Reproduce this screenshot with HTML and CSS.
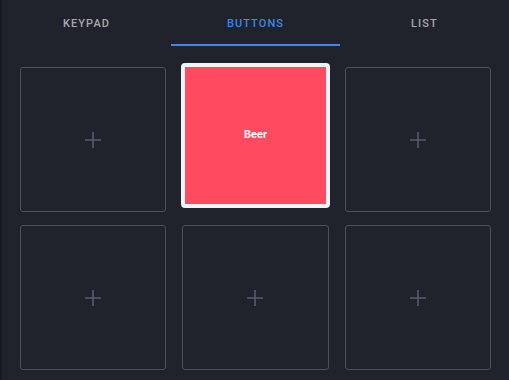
FILE: index.html
```html
<!DOCTYPE html>
<html>
<head>
<meta charset="utf-8">
<link rel="stylesheet" href="styles.css">
</head>
<body>
<div class="app">
  <div class="rail"></div>
  <main class="main">
    <nav class="tabs">
      <div class="tab">KEYPAD</div>
      <div class="tab active">BUTTONS</div>
      <div class="tab">LIST</div>
    </nav>
    <section class="grid">
      <div class="cell"><svg class="plus" viewBox="0 0 16 16"><path d="M8 0V16M0 8H16"/></svg></div>
      <div class="cell selected"><span class="label">Beer</span></div>
      <div class="cell"><svg class="plus" viewBox="0 0 16 16"><path d="M8 0V16M0 8H16"/></svg></div>
      <div class="cell"><svg class="plus" viewBox="0 0 16 16"><path d="M8 0V16M0 8H16"/></svg></div>
      <div class="cell"><svg class="plus" viewBox="0 0 16 16"><path d="M8 0V16M0 8H16"/></svg></div>
      <div class="cell"><svg class="plus" viewBox="0 0 16 16"><path d="M8 0V16M0 8H16"/></svg></div>
    </section>
  </main>
</div>
</body>
</html>
```
FILE: styles.css
```css
html, body {
  margin: 0;
  padding: 0;
  background: #20232c;
  font-family: Roboto, "Liberation Sans", sans-serif;
}
.app {
  display: flex;
  width: 509px;
  height: 380px;
  overflow: hidden;
}
.rail {
  width: 2px;
  flex: none;
  background: #17191f;
}
.main {
  flex: 1;
  display: flex;
  flex-direction: column;
}
.tabs {
  display: flex;
  height: 46px;
}
.tab {
  flex: 1;
  display: flex;
  align-items: center;
  justify-content: center;
  font-size: 11px;
  font-weight: 500;
  letter-spacing: 1.1px;
  color: #a6a8b0;
  box-sizing: border-box;
  padding-top: 2px;
  border-bottom: 2px solid transparent;
}
.tab.active {
  color: #3d86ee;
  border-bottom-color: #3d86ee;
}
.grid {
  display: grid;
  grid-template-columns: repeat(3, 1fr);
  grid-auto-rows: 145px;
  column-gap: 16px;
  row-gap: 13px;
  padding: 21px 18px 0 18px;
}
.cell {
  border: 1px solid #4c4f5c;
  border-radius: 3px;
  display: flex;
  align-items: center;
  justify-content: center;
}
.plus {
  width: 16px;
  height: 16px;
  stroke: #595c69;
  stroke-width: 1.6;
  fill: none;
}
.cell.selected {
  border: 4px solid #f2f3f6;
  border-radius: 4px;
  background: #ff4a5f;
  margin: 0 -1.5px;
  transform: translateY(-4px);
}
.label {
  color: #ffffff;
  font-size: 11px;
  font-weight: 700;
  margin-top: -3px;
}
```
